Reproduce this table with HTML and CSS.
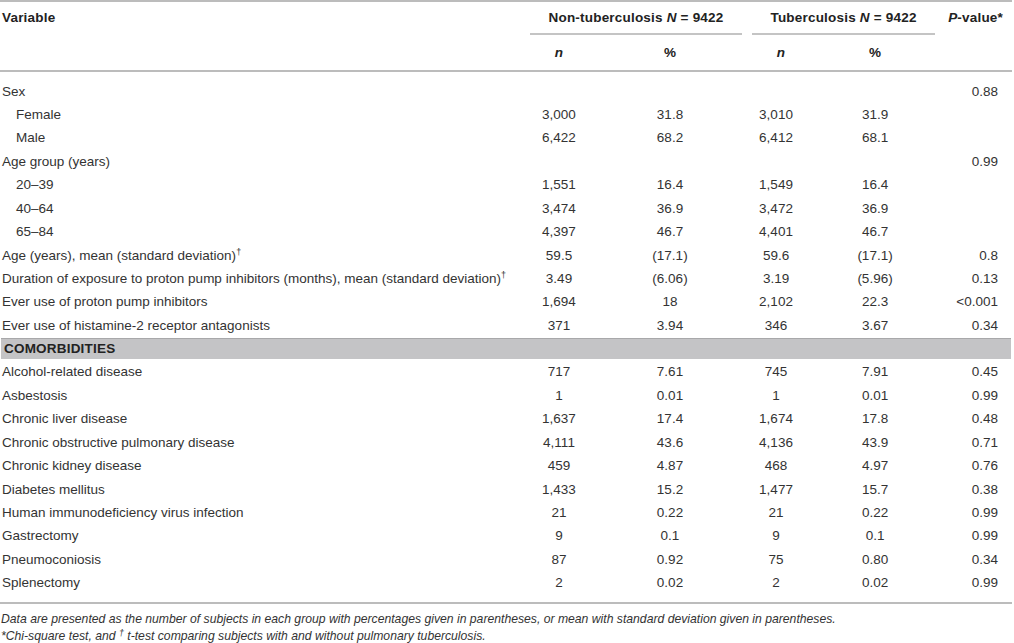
FILE: index.html
```html
<!DOCTYPE html>
<html>
<head>
<meta charset="utf-8">
<link rel="stylesheet" href="styles.css">
</head>
<body>
<table class="tbl">
  <colgroup>
    <col class="c-var"><col class="c-n1"><col class="c-p1"><col class="c-n2"><col class="c-p2"><col class="c-pv">
  </colgroup>
  <thead>
    <tr class="h1">
      <th class="var" rowspan="2">Variable</th>
      <th colspan="2" class="grp"><div class="grp-a">Non-tuberculosis <i>N</i> = 9422</div></th>
      <th colspan="2" class="grp"><div class="grp-b">Tuberculosis <i>N</i> = 9422</div></th>
      <th class="pv" rowspan="2"><i>P</i>-value*</th>
    </tr>
    <tr class="h2">
      <th class="ctr"><i>n</i></th>
      <th class="ctr">%</th>
      <th class="ctr nh2"><i>n</i></th>
      <th class="ctr">%</th>
    </tr>
  </thead>
  <tbody>
    <tr class="first"><td>Sex</td><td></td><td></td><td></td><td></td><td class="r">0.88</td></tr>
    <tr><td class="ind">Female</td><td>3,000</td><td>31.8</td><td>3,010</td><td>31.9</td><td class="r"></td></tr>
    <tr><td class="ind">Male</td><td>6,422</td><td>68.2</td><td>6,412</td><td>68.1</td><td class="r"></td></tr>
    <tr><td>Age group (years)</td><td></td><td></td><td></td><td></td><td class="r">0.99</td></tr>
    <tr><td class="ind">20–39</td><td>1,551</td><td>16.4</td><td>1,549</td><td>16.4</td><td class="r"></td></tr>
    <tr><td class="ind">40–64</td><td>3,474</td><td>36.9</td><td>3,472</td><td>36.9</td><td class="r"></td></tr>
    <tr><td class="ind">65–84</td><td>4,397</td><td>46.7</td><td>4,401</td><td>46.7</td><td class="r"></td></tr>
    <tr><td>Age (years), mean (standard deviation)<sup>†</sup></td><td>59.5</td><td>(17.1)</td><td>59.6</td><td>(17.1)</td><td class="r">0.8</td></tr>
    <tr><td>Duration of exposure to proton pump inhibitors (months), mean (standard deviation)<sup>†</sup></td><td>3.49</td><td>(6.06)</td><td>3.19</td><td>(5.96)</td><td class="r">0.13</td></tr>
    <tr><td>Ever use of proton pump inhibitors</td><td>1,694</td><td>18</td><td>2,102</td><td>22.3</td><td class="r">&lt;0.001</td></tr>
    <tr><td>Ever use of histamine-2 receptor antagonists</td><td>371</td><td>3.94</td><td>346</td><td>3.67</td><td class="r">0.34</td></tr>
    <tr class="band"><td colspan="6"><div class="band-in">COMORBIDITIES</div></td></tr>
    <tr><td>Alcohol-related disease</td><td>717</td><td>7.61</td><td>745</td><td>7.91</td><td class="r">0.45</td></tr>
    <tr><td>Asbestosis</td><td>1</td><td>0.01</td><td>1</td><td>0.01</td><td class="r">0.99</td></tr>
    <tr><td>Chronic liver disease</td><td>1,637</td><td>17.4</td><td>1,674</td><td>17.8</td><td class="r">0.48</td></tr>
    <tr><td>Chronic obstructive pulmonary disease</td><td>4,111</td><td>43.6</td><td>4,136</td><td>43.9</td><td class="r">0.71</td></tr>
    <tr><td>Chronic kidney disease</td><td>459</td><td>4.87</td><td>468</td><td>4.97</td><td class="r">0.76</td></tr>
    <tr><td>Diabetes mellitus</td><td>1,433</td><td>15.2</td><td>1,477</td><td>15.7</td><td class="r">0.38</td></tr>
    <tr><td>Human immunodeficiency virus infection</td><td>21</td><td>0.22</td><td>21</td><td>0.22</td><td class="r">0.99</td></tr>
    <tr><td>Gastrectomy</td><td>9</td><td>0.1</td><td>9</td><td>0.1</td><td class="r">0.99</td></tr>
    <tr><td>Pneumoconiosis</td><td>87</td><td>0.92</td><td>75</td><td>0.80</td><td class="r">0.34</td></tr>
    <tr class="last"><td>Splenectomy</td><td>2</td><td>0.02</td><td>2</td><td>0.02</td><td class="r">0.99</td></tr>
  </tbody>
</table>
<div class="notes">
  <p>Data are presented as the number of subjects in each group with percentages given in parentheses, or mean with standard deviation given in parentheses.</p>
  <p>*Chi-square test, and <sup>†</sup> t-test comparing subjects with and without pulmonary tuberculosis.</p>
</div>
</body>
</html>
```

FILE: styles.css
```css
html, body {
  margin: 0;
  padding: 0;
  background: #ffffff;
}
body {
  font-family: "Liberation Sans", Arial, sans-serif;
  font-size: 13.5px;
  color: #333333;
}
.tbl {
  width: 1012px;
  border-collapse: collapse;
  table-layout: fixed;
  border-top: 2px solid #bcbcbc;
}
.c-var { width: 528px; }
.c-n1 { width: 62px; }
.c-p1 { width: 160px; }
.c-n2 { width: 52px; }
.c-p2 { width: 146px; }
.c-pv { width: 64px; }

th {
  font-weight: bold;
  color: #222222;
  line-height: 15px;
  padding: 0;
  letter-spacing: 0.2px;
}
.h1 th {
  padding-top: 8px;
  vertical-align: top;
}
.h1 th.var {
  text-align: left;
  padding-left: 2px;
  border-bottom: 2px solid #bcbcbc;
}
.h1 th.pv {
  text-align: right;
  padding-right: 9px;
  border-bottom: 2px solid #bcbcbc;
}
.grp-a, .grp-b {
  text-align: center;
  padding-bottom: 8px;
  border-bottom: 2px solid #c4c4c4;
}
.grp-a { margin: 0 8px 0 2px; }
.grp-b { margin: 0 13px 0 2px; }
.h2 th {
  padding: 10px 0 10px;
  text-align: center;
  border-bottom: 2px solid #bcbcbc;
}
.h2 th.nh2 { padding-left: 10px; }

td {
  padding: 4.22px 0;
  line-height: 15px;
  text-align: center;
  vertical-align: middle;
  white-space: nowrap;
}
td:first-child {
  text-align: left;
  padding-left: 2px;
}
td.ind { padding-left: 16px; }
td.r {
  text-align: right;
  padding-right: 14px;
}
tr.first td { padding-top: 11.5px; }
tr.last td {
  padding-bottom: 12px;
  border-bottom: 2px solid #bcbcbc;
}
sup {
  font-size: 9px;
  line-height: 0;
  vertical-align: 5px;
}
tr.band td {
  padding: 1px 1px 1px 1px;
}
.band-in {
  background: #c4c4c6;
  border-top: 1px solid #a8a8aa;
  font-weight: bold;
  color: #222222;
  line-height: 19px;
  height: 20px;
  padding-left: 3px;
  letter-spacing: 0.2px;
}
.notes {
  padding-top: 7px;
  font-style: italic;
  font-size: 12.2px;
  line-height: 17px;
  color: #333333;
}
.notes p {
  margin: 0;
  padding-left: 1px;
}
.notes sup {
  font-size: 9px;
  vertical-align: 4px;
}
```
